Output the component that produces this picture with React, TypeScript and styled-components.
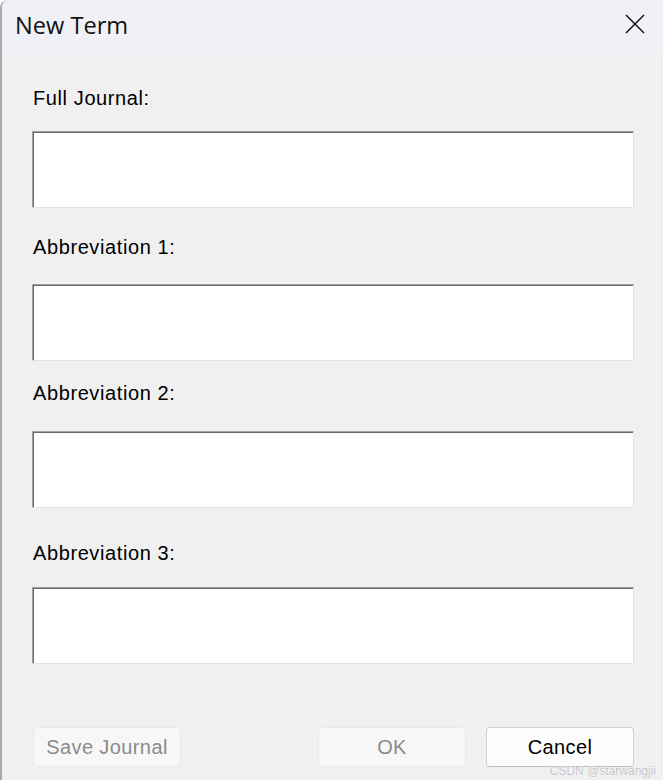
import * as React from "react";
import styled, { createGlobalStyle } from "styled-components";

const GlobalStyle = createGlobalStyle`
  html, body {
    margin: 0;
    padding: 0;
    background: #ffffff;
  }
  * {
    box-sizing: border-box;
  }
`;

const fields = [
  { label: "Full Journal:", mt: 34, gap: 21 },
  { label: "Abbreviation 1:", mt: 27, gap: 25 },
  { label: "Abbreviation 2:", mt: 20, gap: 26 },
  { label: "Abbreviation 3:", mt: 33, gap: 22 },
];

const Window = styled.div`
  position: relative;
  width: 663px;
  height: 780px;
  display: flex;
  flex-direction: column;
  background: #f0f0f0;
  border-left: 2px solid #a9a9a9;
  border-top-left-radius: 8px;
  overflow: hidden;
`;

const TitleBar = styled.div`
  height: 52px;
  flex: none;
  display: flex;
  align-items: center;
  justify-content: space-between;
  padding: 0 18px 0 13px;
  background: #eff1f6;
`;

const Title = styled.span`
  font-family: "Open Sans", "Noto Sans", sans-serif;
  font-size: 23.6px;
  color: #111111;
  padding-bottom: 2px;
`;

const CloseButton = styled.button`
  width: 20px;
  height: 20px;
  padding: 0;
  border: none;
  background: transparent;
  display: flex;
  align-items: center;
  justify-content: center;
  margin-bottom: 4px;
`;

const Content = styled.div`
  flex: 1;
  display: flex;
  flex-direction: column;
  padding: 0 29px 0 30px;
`;

const Field = styled.div<{ $mt: number; $gap: number }>`
  display: flex;
  flex-direction: column;
  margin-top: ${(p) => p.$mt}px;
  gap: ${(p) => p.$gap}px;
`;

const Label = styled.label`
  font-family: "Liberation Sans", Arial, sans-serif;
  font-size: 20px;
  line-height: 24px;
  letter-spacing: 0.6px;
  color: #000000;
  padding-left: 1px;
`;

const TextBox = styled.div`
  height: 77px;
  background: #ffffff;
  border: 1px solid;
  border-color: #a0a0a0 #e3e3e3 #e3e3e3 #a0a0a0;
  box-shadow: inset 1px 1px 0 #6a6a6a;
`;

const ButtonRow = styled.div`
  margin-top: 63px;
  display: flex;
  justify-content: space-between;
  padding-left: 1px;
`;

const ButtonGroup = styled.div`
  display: flex;
  gap: 20px;
`;

const DialogButton = styled.button<{ $disabled?: boolean }>`
  width: 148px;
  height: 40px;
  border-radius: 4px;
  font-family: "Liberation Sans", Arial, sans-serif;
  font-size: 20px;
  letter-spacing: 0.4px;
  padding: 0;
  background: ${(p) => (p.$disabled ? "#f7f7f7" : "#fdfdfd")};
  border: 1px solid ${(p) => (p.$disabled ? "#e9e9e9" : "#d0d0d0")};
  border-bottom-color: ${(p) => (p.$disabled ? "#e9e9e9" : "#bdbdbd")};
  color: ${(p) => (p.$disabled ? "#8b8b8b" : "#000000")};
`;

const Watermark = styled.span`
  position: absolute;
  right: 7px;
  bottom: 2px;
  font-family: "Liberation Sans", Arial, sans-serif;
  font-size: 12px;
  color: #c4c4c4;
  text-shadow: 0 0 1px #ffffff, 0 0 1px #ffffff;
`;

const CloseIcon = () => (
  <svg width="20" height="20" viewBox="0 0 20 20">
    <path d="M1 1 L19 19 M19 1 L1 19" stroke="#1a1a1a" strokeWidth="1.6" fill="none" />
  </svg>
);

const App = () => {
  return (
    <>
      <GlobalStyle />
      <Window>
        <TitleBar>
          <Title>New Term</Title>
          <CloseButton aria-label="Close">
            <CloseIcon />
          </CloseButton>
        </TitleBar>
        <Content>
          {fields.map((f) => (
            <Field key={f.label} $mt={f.mt} $gap={f.gap}>
              <Label>{f.label}</Label>
              <TextBox />
            </Field>
          ))}
          <ButtonRow>
            <DialogButton $disabled>Save Journal</DialogButton>
            <ButtonGroup>
              <DialogButton $disabled>OK</DialogButton>
              <DialogButton>Cancel</DialogButton>
            </ButtonGroup>
          </ButtonRow>
        </Content>
        <Watermark>CSDN @starwangjii</Watermark>
      </Window>
    </>
  );
};

export default App;
